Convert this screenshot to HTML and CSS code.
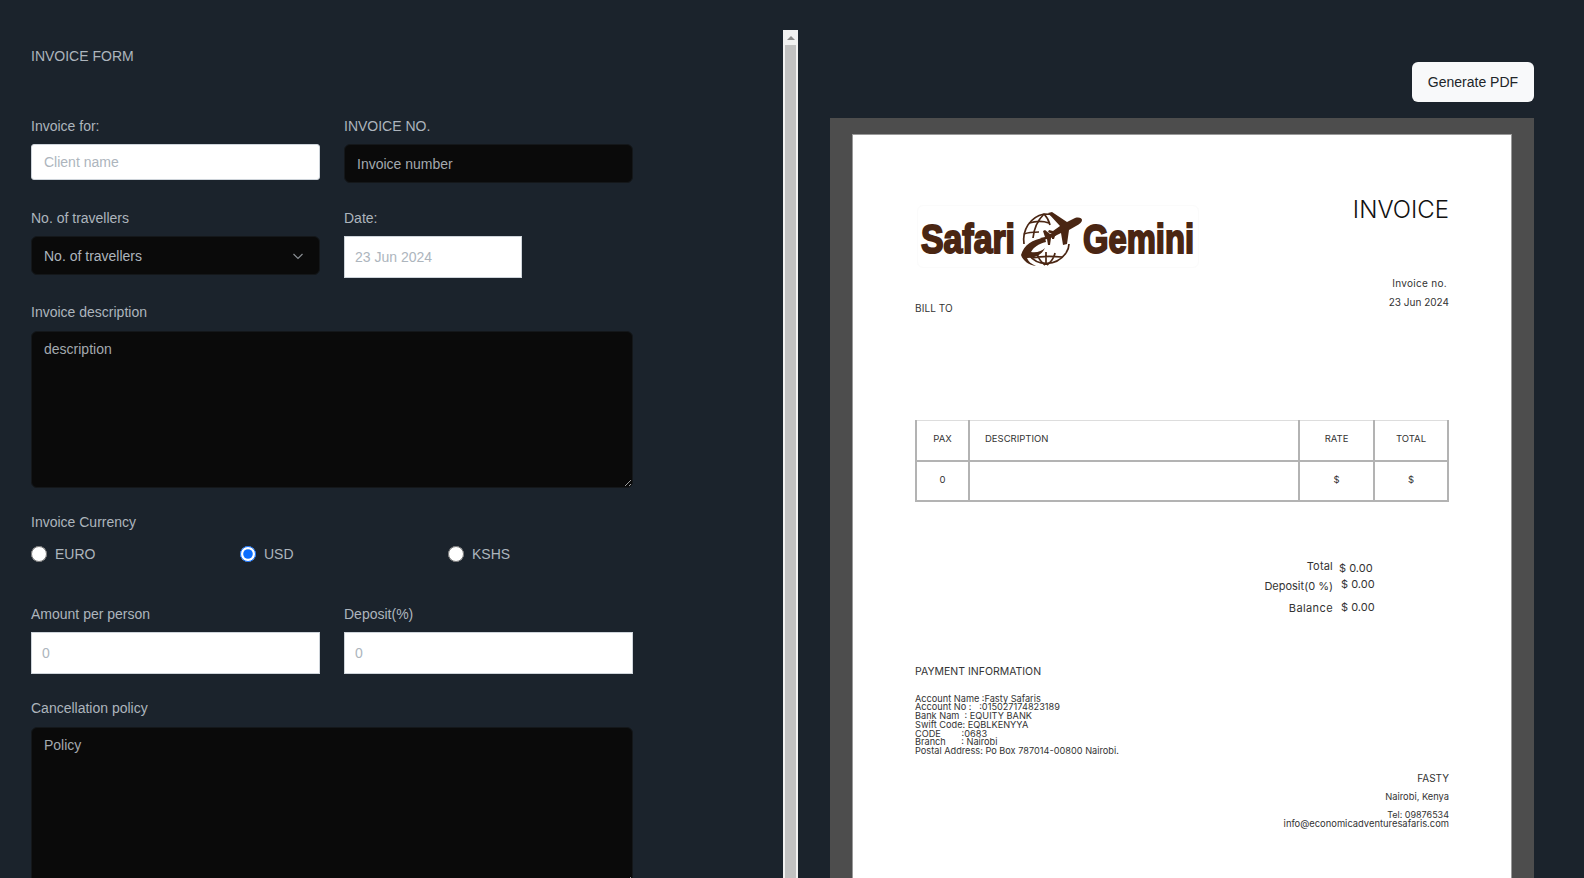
FILE: index.html
```html
<!DOCTYPE html>
<html lang="en">
<head>
    <meta charset="UTF-8">
    <meta name="viewport" content="width=device-width, initial-scale=1.0">
    <title>Invoice Generator</title>
    <link rel="stylesheet" href="styles.css">
</head>
<body>
    <div id="app">
        <div id="formPanel">
            <form id="invoiceForm">
                <h1>INVOICE FORM</h1>

                <div class="row row-first">
                    <div class="field">
                        <label>Invoice for:</label>
                        <input class="light client" type="text" placeholder="Client name">
                    </div>
                    <div class="field">
                        <label>INVOICE NO.</label>
                        <input class="dark" type="text" placeholder="Invoice number">
                    </div>
                </div>

                <div class="row row-second">
                    <div class="field">
                        <label>No. of travellers</label>
                        <div class="select">
                            <span>No. of travellers</span>
                            <svg width="12" height="12" viewBox="0 0 12 12"><path d="M1.5 4l4.500 4.500L10.500 4" fill="none" stroke="#8a8f94" stroke-width="1.2"/></svg>
                        </div>
                    </div>
                    <div class="field">
                        <label>Date:</label>
                        <input class="light boxy date" type="text" placeholder="23 Jun 2024">
                    </div>
                </div>

                <div class="field wide">
                    <label class="roomy">Invoice description</label>
                    <textarea class="dark description" placeholder="description"></textarea>
                </div>

                <div class="field wide currency">
                    <label>Invoice Currency</label>
                    <div class="radios">
                        <label class="radio"><input type="radio" name="currency"> EURO</label>
                        <label class="radio"><input type="radio" name="currency" checked> USD</label>
                        <label class="radio"><input type="radio" name="currency"> KSHS</label>
                    </div>
                </div>

                <div class="row row-amount">
                    <div class="field">
                        <label>Amount per person</label>
                        <input class="light boxy" type="text" placeholder="0">
                    </div>
                    <div class="field">
                        <label>Deposit(%)</label>
                        <input class="light boxy" type="text" placeholder="0">
                    </div>
                </div>

                <div class="field wide">
                    <label class="roomy">Cancellation policy</label>
                    <textarea class="dark policy" placeholder="Policy"></textarea>
                </div>
            </form>
            <div class="scrollbar">
                <div class="scroll-up"></div>
                <div class="scroll-thumb"></div>
            </div>
        </div>

        <div id="previewPanel">
            <div class="toolbar">
                <button type="button">Generate PDF</button>
            </div>
            <div class="sheet-wrap">
                <div class="sheet">
                    <div class="sheet-top">
                        <div class="logo">
                            <svg width="272" height="60" viewBox="0 0 272 60">
                                <text class="logo-text" x="-1" y="44" textLength="94" lengthAdjust="spacingAndGlyphs">Safari</text>
                                <g transform="translate(90 -3)">
                                    <g fill="none" stroke="#4a2613" stroke-width="1.7">
                                        <path d="M12 38C10 24 18 11 32 8c3 0 6 0 9 1"/>
                                        <path d="M32 8c-6 6-10 14-11 24"/>
                                        <path d="M32 8c3 3 5 7 6 11"/>
                                        <path d="M17 17c7-2 14-2 20 0"/>
                                        <path d="M12 28c5-2 10-2 15-2"/>
                                        <path d="M17 49c8 11 27 12 37-2"/>
                                        <path d="M25 47c1 5 4 9 8 12M43 47c-1 5-4 9-8 12M34 46v13M20 52c9-2 20-2 30-1"/>
                                        <path d="M54 47c2-3 3-6 3-9"/>
                                    </g>
                                    <path fill="#4a2613" d="M36 7l4-1 15 10 8-4c4-1 7 0 7 2s-2 4-6 6l-7 4-2 14-4 1-2-12-6 3-1 3-2 0v-5l-4-2 1-2 4 1 7-5z"/>
                                    <path fill="#4a2613" d="M31 25l2-1 5 4 5-1c2 0 2 2 0 3l-4 2-1 7-2 0-1-6-4 1-3-2 5-1z"/>
                                    <path fill="#4a2613" d="M9 49c3-10 11-16 24-17l1 4c-8 2-12 5-15 10 6 1 11-1 14-4-3 7-10 10-18 10 1 3 4 6 9 8-7-1-13-5-15-11z"/>
                                </g>
                                <text class="logo-text" x="161" y="44" textLength="111" lengthAdjust="spacingAndGlyphs">Gemini</text>
                            </svg>
                        </div>
                        <div class="sheet-title">
                            <h2>INVOICE</h2>
                            <p class="inv-no">Invoice no.</p>
                            <p class="inv-date">23 Jun 2024</p>
                        </div>
                    </div>
                    <p class="bill-to">BILL TO</p>

                    <table class="items">
                        <tr class="head">
                            <td class="pax">PAX</td>
                            <td class="desc">DESCRIPTION</td>
                            <td class="rate">RATE</td>
                            <td class="total">TOTAL</td>
                        </tr>
                        <tr>
                            <td class="pax">0</td>
                            <td class="desc"></td>
                            <td class="rate">$</td>
                            <td class="total">$</td>
                        </tr>
                    </table>

                    <div class="sums">
                        <div class="sum sum-total"><span>Total</span><b>$ 0.00</b></div>
                        <div class="sum sum-deposit"><span>Deposit(0 %)</span><b>$ 0.00</b></div>
                        <div class="sum sum-balance"><span>Balance</span><b>$ 0.00</b></div>
                    </div>

                    <p class="pay-title">PAYMENT INFORMATION</p>
                    <div class="pay-lines">
                        <div>Account Name :Fasty Safaris</div>
                        <div>Account No :&nbsp;&nbsp; :015027174823189</div>
                        <div>Bank Nam&nbsp; : EQUITY BANK</div>
                        <div>Swift Code: EQBLKENYYA</div>
                        <div>CODE&nbsp;&nbsp;&nbsp;&nbsp;&nbsp;&nbsp;&nbsp; :0683</div>
                        <div>Branch&nbsp;&nbsp;&nbsp;&nbsp;&nbsp; : Nairobi</div>
                        <div>Postal Address: Po Box 787014-00800 Nairobi.</div>
                    </div>

                    <div class="company">
                        <p class="c-name">FASTY</p>
                        <p class="c-city">Nairobi, Kenya</p>
                        <p class="c-tel">Tel: 09876534</p>
                        <p class="c-mail">info@economicadventuresafaris.com</p>
                    </div>
                </div>
            </div>
        </div>
    </div>
</body>
</html>
```
FILE: styles.css
```css
* {
    box-sizing: border-box;
}
html, body {
    height: 100%;
}
body {
    margin: 0;
    overflow: hidden;
    background: #1b232c;
    font-family: "Liberation Sans", Arial, sans-serif;
    font-size: 14px;
    color: #adb5bd;
}
#app {
    display: flex;
    align-items: flex-start;
    padding-top: 30px;
}

/* left side */
#formPanel {
    display: flex;
    justify-content: space-between;
    width: 798px;
    flex: none;
    height: 848px;
    overflow: hidden;
    padding-left: 31px;
}
.scrollbar {
    flex: none;
    display: flex;
    flex-direction: column;
    width: 15px;
    height: 100%;
    background: #f1f1f1;
}
.scroll-up {
    flex: none;
    height: 15px;
    display: flex;
    justify-content: center;
    padding-top: 6px;
}
.scroll-up::before {
    content: "";
    width: 0;
    height: 0;
    border-left: 4px solid transparent;
    border-right: 4px solid transparent;
    border-bottom: 4px solid #8a8a8a;
}
.scroll-thumb {
    flex: 1;
    margin: 0 2px;
    background: #c1c1c1;
}
#invoiceForm {
    width: 602px;
    flex: none;
}
h1 {
    margin: 0;
    font-size: 14px;
    font-weight: normal;
    line-height: 20px;
    padding-top: 16px;
}
.row {
    display: grid;
    grid-template-columns: 289px 289px;
    column-gap: 24px;
    align-items: start;
}
.row-first {
    margin-top: 50px;
}
.row-second {
    margin-top: 25px;
}
.row-amount {
    margin-top: 40px;
}
.field label {
    display: block;
    line-height: 20px;
    margin-bottom: 8px;
}
.field label.roomy {
    margin-bottom: 9px;
}
.wide {
    margin-top: 24px;
}
input, textarea {
    font-family: inherit;
    font-size: 14px;
    outline: none;
}
input::placeholder, textarea::placeholder {
    opacity: 1;
}
.light {
    display: block;
    width: 100%;
    height: 42px;
    padding: 0 10px;
    background: white;
    border: 1px solid #ced4da;
    color: #333;
}
.light::placeholder {
    color: #adb5bd;
}
.client {
    height: 36px;
    padding: 0 12px;
    border-radius: 3px;
}
.date {
    width: 178px;
}
.dark {
    display: block;
    width: 100%;
    background: #0a0a0a;
    border: 1px solid #14171a;
    border-radius: 6px;
    color: #adb5bd;
    padding: 0 12px;
}
.dark::placeholder {
    color: #a3a9af;
}
input.dark {
    height: 39px;
}
textarea.dark {
    padding-top: 9px;
}
.description {
    height: 157px;
}
.policy {
    height: 158px;
}
.select {
    display: flex;
    justify-content: space-between;
    align-items: center;
    height: 39px;
    padding: 0 15px 0 12px;
    background: #0a0a0a;
    border: 1px solid #14171a;
    border-radius: 6px;
    color: #adb5bd;
}
.currency {
    margin-top: 24px;
}
.radios {
    display: grid;
    grid-template-columns: 209px 208px 1fr;
    margin-top: 12px;
}
.field label.radio {
    display: flex;
    align-items: center;
    gap: 8px;
    margin: 0;
    height: 20px;
}
.radio input {
    width: 16px;
    height: 16px;
    margin: 0;
    accent-color: #0d6efd;
}

/* right side */
#previewPanel {
    flex: none;
    width: 736px;
    padding-left: 32px;
    margin-top: -30px;
}
.toolbar {
    display: flex;
    justify-content: flex-end;
    padding-top: 62px;
    height: 118px;
}
button {
    width: 122px;
    height: 40px;
    background: #f8f9fa;
    color: #212529;
    border: none;
    border-radius: 6px;
    font-family: inherit;
    font-size: 14px;
    padding: 0;
}
.sheet-wrap {
    background: #4d4d4d;
    padding: 16px 22px 0;
    height: 800px;
}
.sheet {
    background: white;
    height: 100%;
    border: 1px solid #999;
    border-bottom: none;
    padding: 0 62px;
    color: #333;
    font-family: "Inter", "Open Sans", sans-serif;
    font-size: 10px;
}
.sheet p {
    margin: 0;
}
.sheet-top {
    display: flex;
    justify-content: space-between;
    height: 166px;
}
.logo {
    height: 63px;
    margin-top: 70px;
    margin-left: 2px;
    padding: 3px 4px;
    border: 1px solid #fbfbfb;
    border-radius: 6px;
}
.logo svg {
    display: block;
    overflow: visible;
}
.logo-text {
    font-family: "Liberation Sans", sans-serif;
    font-weight: bold;
    font-size: 41px;
    fill: #4a2613;
    stroke: #4a2613;
    stroke-width: 2px;
}
.sheet-title {
    text-align: right;
}
.sheet-title h2 {
    margin: 0;
    padding-top: 60px;
    font-size: 24px;
    line-height: 30px;
    font-weight: 300;
    color: #111;
}
.inv-no {
    margin-top: 51px !important;
    line-height: 14px;
    padding-right: 2px;
    letter-spacing: 0.3px;
}
.inv-date {
    margin-top: 5px !important;
    line-height: 14px;
}
.bill-to {
    line-height: 14px;
    letter-spacing: 0.1px;
}
table.items {
    width: 534px;
    margin-top: 105px;
    border-collapse: collapse;
    table-layout: fixed;
    font-size: 9.5px;
}
.items td {
    border: 2px solid #b3b3b3;
    height: 40px;
    text-align: center;
    padding: 0 0 3px;
}
.items .head td {
    border-top: 1px solid #ddd;
}
.items .desc {
    border-right-width: 1px;
}
.items .pax {
    width: 53px;
}
.items .rate {
    width: 75px;
}
.items .total {
    width: 74px;
}
.items .desc {
    text-align: left;
    padding-left: 15px;
}
.sums {
    margin-top: 57px;
    margin-left: 270px;
    width: 190px;
    font-size: 11px;
}
.sum {
    display: flex;
    align-items: flex-start;
    gap: 6px;
}
.sum span {
    width: 148px;
    text-align: right;
    line-height: 14px;
}
.sum b {
    font-weight: normal;
    line-height: 14px;
}
.sum-total {
    height: 18px;
}
.sum-total span {
    letter-spacing: 0.2px;
}
.sum-total b {
    margin-top: 2px;
}
.sum-deposit {
    height: 23px;
}
.sum-deposit span {
    margin-top: 2px;
}
.sum-deposit b {
    margin-left: 2px;
}
.sum-balance {
    height: 18px;
}
.sum-balance span {
    margin-top: 1px;
    letter-spacing: 0.4px;
}
.sum-balance b {
    margin-left: 2px;
}
.pay-title {
    margin-top: 47px !important;
    line-height: 14px;
    font-size: 10.5px;
}
.pay-lines {
    margin-top: 16px;
    line-height: 8.8px;
    font-size: 9.2px;
}
.company {
    margin-top: 15px;
    text-align: right;
}
.c-name {
    line-height: 14px;
}
.c-city {
    margin-top: 5px !important;
    line-height: 14px;
    font-size: 9.3px;
}
.c-tel {
    margin-top: 6px !important;
    line-height: 9px;
    font-size: 9px;
}
.c-mail {
    line-height: 9px;
    font-size: 9.4px;
}
```
